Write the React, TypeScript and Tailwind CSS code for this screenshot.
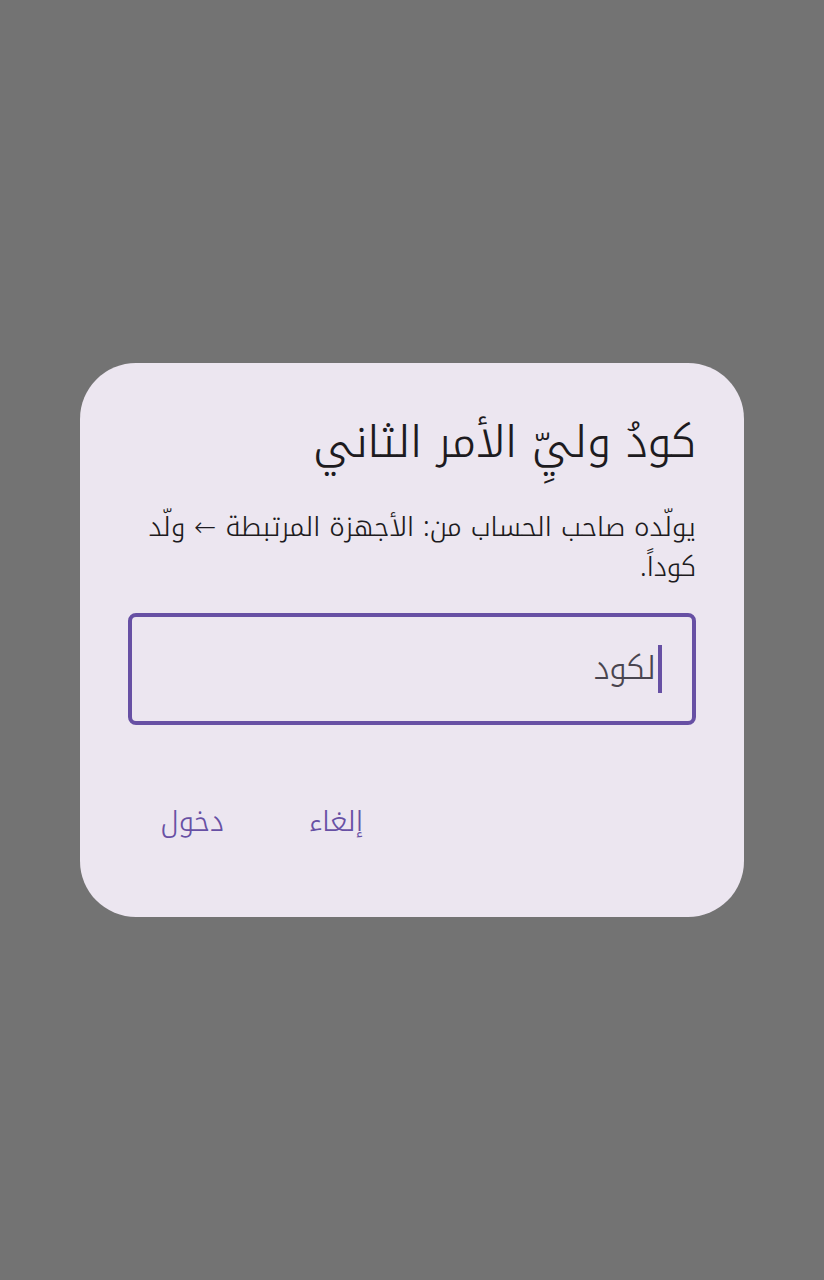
export default function App() {
  return (
    <div
      dir="rtl"
      className="min-h-screen w-full flex items-center justify-center bg-[#737373]"
      style={{ fontFamily: '"Noto Kufi Arabic", "Noto Sans Arabic", "DejaVu Sans", sans-serif' }}
    >
      <div className="w-[664px] rounded-[56px] bg-[#ece6f0] px-12 pt-12 pb-[55px] flex flex-col font-light">
        <h1 className="text-[44px] leading-[64px] font-light text-[#1d1b20]">كودُ وليِّ الأمر الثاني</h1>
        <p className="mt-8 text-[26.5px] leading-[40px] text-[#1d1b20]">
          يولّده صاحب الحساب من: الأجهزة المرتبطة ← ولّد كوداً.
        </p>
        <div className="mt-[26px] h-[112px] rounded-[8px] border-4 border-[#6750a4] flex items-center pr-[30px]">
          <div className="w-[4px] h-[48px] bg-[#6750a4]" />
          <span className="mr-[2px] text-[32px] text-[#49454f]">لكود</span>
        </div>
        <div className="mt-[57px] flex justify-end gap-4">
          <button className="h-20 min-w-[128px] px-6 rounded-full text-[28px] text-[#6750a4] flex items-center justify-center">
            إلغاء
          </button>
          <button className="h-20 min-w-[128px] px-6 rounded-full text-[28px] text-[#6750a4] flex items-center justify-center">
            دخول
          </button>
        </div>
      </div>
    </div>
  );
}
